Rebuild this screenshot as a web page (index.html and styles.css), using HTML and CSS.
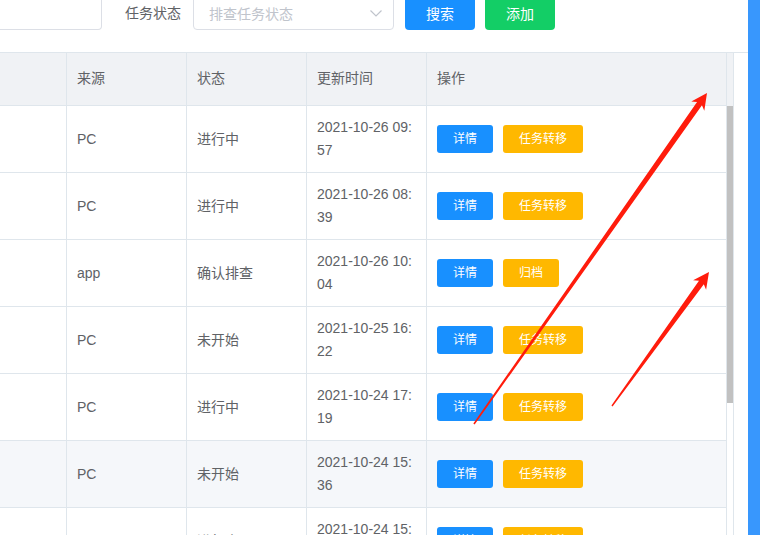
FILE: index.html
```html
<!DOCTYPE html>
<html lang="zh-CN">
<head>
<meta charset="utf-8">
<title>任务列表</title>
<link rel="stylesheet" href="styles.css">
</head>
<body>
<div class="page">
  <div class="main">
    <div class="toolbar">
      <div class="input first-input"></div>
      <label class="form-label">任务状态</label>
      <div class="input select">
        <span class="placeholder">排查任务状态</span>
        <svg class="chevron" width="12" height="7" viewBox="0 0 12 7"><path d="M0.5 0.5 L6 6 L11.5 0.5" fill="none" stroke="#c0c4cc" stroke-width="1.2"/></svg>
      </div>
      <button class="btn btn-primary">搜索</button>
      <button class="btn btn-success">添加</button>
    </div>

    <div class="table-wrap">
      <table class="data-table">
        <colgroup>
          <col class="c0"><col class="c1"><col class="c2"><col class="c3"><col class="c4">
        </colgroup>
        <thead>
          <tr><th></th><th>来源</th><th>状态</th><th>更新时间</th><th>操作</th></tr>
        </thead>
        <tbody>
          <tr><td></td><td>PC</td><td>进行中</td><td>2021-10-26 09:57</td><td><div class="ops"><button class="sbtn sbtn-blue">详情</button><button class="sbtn sbtn-orange">任务转移</button></div></td></tr>
          <tr><td></td><td>PC</td><td>进行中</td><td>2021-10-26 08:39</td><td><div class="ops"><button class="sbtn sbtn-blue">详情</button><button class="sbtn sbtn-orange">任务转移</button></div></td></tr>
          <tr><td></td><td>app</td><td>确认排查</td><td>2021-10-26 10:04</td><td><div class="ops"><button class="sbtn sbtn-blue">详情</button><button class="sbtn sbtn-orange">归档</button></div></td></tr>
          <tr><td></td><td>PC</td><td>未开始</td><td>2021-10-25 16:22</td><td><div class="ops"><button class="sbtn sbtn-blue">详情</button><button class="sbtn sbtn-orange">任务转移</button></div></td></tr>
          <tr><td></td><td>PC</td><td>进行中</td><td>2021-10-24 17:19</td><td><div class="ops"><button class="sbtn sbtn-blue">详情</button><button class="sbtn sbtn-orange">任务转移</button></div></td></tr>
          <tr class="row-hover"><td></td><td>PC</td><td>未开始</td><td>2021-10-24 15:36</td><td><div class="ops"><button class="sbtn sbtn-blue">详情</button><button class="sbtn sbtn-orange">任务转移</button></div></td></tr>
          <tr><td></td><td>PC</td><td>进行中</td><td>2021-10-24 15:12</td><td><div class="ops"><button class="sbtn sbtn-blue">详情</button><button class="sbtn sbtn-orange">任务转移</button></div></td></tr>
        </tbody>
      </table>
      <div class="gutter">
        <div class="gutter-head"></div>
        <div class="track"><div class="thumb"></div></div>
      </div>
    </div>
  </div>
  <div class="side-bar"></div>

  <svg class="arrows" width="760" height="535" viewBox="0 0 760 535">
    <polygon fill="#ff1c0c" points="473.35,423.54 697.05,101.9 691.3,101.5 707,93 704.3,110.7 701.95,105.3 474.65,424.46"/>
    <polygon fill="#ff1c0c" points="611.43,405.59 698.97,280.74 693.1,280.3 709,272 706.1,289.7 703.83,284.26 612.57,406.41"/>
  </svg>
</div>
</body>
</html>
```

FILE: styles.css
```css
* { box-sizing: border-box; }

html, body {
  margin: 0;
  padding: 0;
  width: 760px;
  height: 535px;
  overflow: hidden;
  background: #fff;
}

body {
  font-family: "Liberation Sans", "Noto Sans CJK SC", sans-serif;
  font-size: 14px;
  color: #606266;
}

.page {
  position: relative;
  display: flex;
  width: 760px;
  height: 535px;
  overflow: hidden;
}

.main {
  width: 748px;
  flex: none;
}

.side-bar {
  width: 12px;
  flex: none;
  background: #3897fd;
}

/* toolbar */
.toolbar {
  display: flex;
  align-items: center;
  height: 34px;
  margin-top: -4px;
  margin-bottom: 22px;
}

.input {
  height: 34px;
  border: 1px solid #dcdfe6;
  border-radius: 4px;
  background: #fff;
}

.first-input {
  width: 102px;
  border-left: none;
  border-top-left-radius: 0;
  border-bottom-left-radius: 0;
}

.form-label {
  margin-left: 23px;
  width: 56px;
  color: #606266;
  font-size: 14px;
  line-height: 34px;
  white-space: nowrap;
}

.select {
  margin-left: 12px;
  width: 201px;
  display: flex;
  align-items: center;
  justify-content: space-between;
  padding: 0 11px 0 15px;
}

.placeholder {
  color: #c0c4cc;
  font-size: 14px;
}

.chevron { display: block; }

.btn {
  height: 34px;
  width: 70px;
  border: none;
  border-radius: 4px;
  color: #fff;
  font-family: inherit;
  font-size: 14px;
  padding: 0;
}

.btn-primary { background: #1890ff; margin-left: 11px; }
.btn-success { background: #13ce66; margin-left: 10px; }

/* table */
.table-wrap {
  display: flex;
  border-top: 1px solid #dfe6ec;
}

.data-table {
  width: 727px;
  table-layout: fixed;
  border-collapse: separate;
  border-spacing: 0;
  flex: none;
}

.c0 { width: 67px; }
.c1, .c2, .c3 { width: 120px; }
.c4 { width: 300px; }

.data-table th,
.data-table td {
  border-right: 1px solid #dfe6ec;
  border-bottom: 1px solid #dfe6ec;
  padding: 0 10px;
  text-align: left;
  line-height: 23px;
  color: #606266;
  font-size: 14px;
}

.data-table th {
  background: #f0f2f5;
  font-weight: normal;
  padding-top: 14px;
  padding-bottom: 15px;
}

.data-table td {
  padding-top: 10px;
  padding-bottom: 10px;
  vertical-align: middle;
  word-break: break-all;
}

.row-hover td { background: #f5f7fa; }

.ops {
  display: flex;
  gap: 10px;
  align-items: center;
}

.sbtn {
  height: 28px;
  padding: 0 16px;
  border: none;
  border-radius: 3px;
  color: #fff;
  font-family: inherit;
  font-size: 12px;
  line-height: 28px;
  white-space: nowrap;
}

.sbtn-blue { background: #1890ff; }
.sbtn-orange { background: #ffb800; }

.gutter {
  width: 7px;
  flex: none;
  border-right: 1px solid #dfe6ec;
  display: flex;
  flex-direction: column;
}

.gutter-head {
  height: 53px;
  background: #f0f2f5;
}

.track {
  flex: 1;
  background: #fff;
}

.thumb {
  height: 297px;
  background: #c1c1c1;
}

.arrows {
  position: absolute;
  left: 0;
  top: 0;
  pointer-events: none;
}
```
